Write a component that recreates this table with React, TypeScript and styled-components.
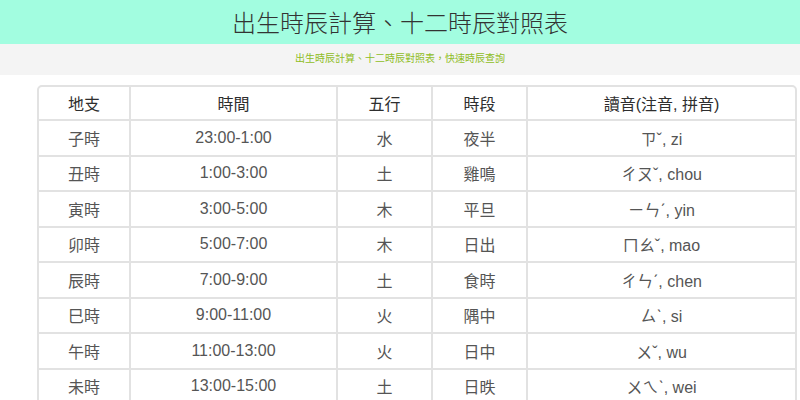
import React from 'react'
import styled, { createGlobalStyle } from 'styled-components'

const GlobalStyle = createGlobalStyle`
	html, body {
		margin: 0;
		padding: 0;
		background: #fff;
	}
	body {
		font-family: 'Liberation Sans', 'Noto Sans CJK TC', Arial, sans-serif;
	}
`

const Page = styled('div')`
	width: 800px;
	height: 400px;
	overflow: hidden;
	display: flex;
	flex-direction: column;
`

const TitleBar = styled('header')`
	flex-shrink: 0;
	height: 44px;
	background-color: #a2fde0;
	display: flex;
	align-items: center;
	justify-content: center;
`

const Title = styled('h1')`
	margin: 0;
	font-family: 'Noto Sans CJK TC', sans-serif;
	font-weight: 300;
	font-size: 24px;
	line-height: 1;
	color: #333;
`

const SubBar = styled('div')`
	flex-shrink: 0;
	height: 31px;
	box-sizing: border-box;
	padding-bottom: 4px;
	background-color: #f4f4f4;
	display: flex;
	align-items: center;
	justify-content: center;
`

const Subtitle = styled('p')`
	margin: 0;
	font-family: 'Noto Sans CJK TC', sans-serif;
	font-size: 10px;
	line-height: 1;
	color: #8fbd1e;
`

const Content = styled('main')`
	flex-shrink: 0;
	padding: 10px 3px 0 37px;
`

const Table = styled('table')`
	width: 760px;
	border-collapse: separate;
	border-spacing: 0;
	border: 2px solid #e2e2e2;
	border-radius: 5px;
	table-layout: fixed;
`

const Cell = styled('td')<{ $head?: boolean }>`
	height: ${(p) => (p.$head ? '32px' : '33.5px')};
	padding: 0;
	text-align: center;
	vertical-align: middle;
	font-size: 16px;
	color: ${(p) => (p.$head ? '#2e2e2e' : '#555')};
	font-weight: 400;
	border-right: 2px solid #e2e2e2;
	border-bottom: 2px solid #e2e2e2;
	&:last-child {
		border-right: none;
	}
`

const Row = styled('tr')`
	&:last-child td {
		border-bottom: none;
	}
`

const columns = ['地支', '時間', '五行', '時段', '讀音(注音, 拼音)']
const widths = [92, 207, 95, 95, 267]

const rows = [
	['子時', '23:00-1:00', '水', '夜半', 'ㄗˇ, zi'],
	['丑時', '1:00-3:00', '土', '雞鳴', 'ㄔㄡˇ, chou'],
	['寅時', '3:00-5:00', '木', '平旦', 'ㄧㄣˊ, yin'],
	['卯時', '5:00-7:00', '木', '日出', 'ㄇㄠˇ, mao'],
	['辰時', '7:00-9:00', '土', '食時', 'ㄔㄣˊ, chen'],
	['巳時', '9:00-11:00', '火', '隅中', 'ㄙˋ, si'],
	['午時', '11:00-13:00', '火', '日中', 'ㄨˇ, wu'],
	['未時', '13:00-15:00', '土', '日昳', 'ㄨㄟˋ, wei'],
]

const App: React.FC = () => {
	return (
		<Page>
			<GlobalStyle />
			<TitleBar>
				<Title>出生時辰計算、十二時辰對照表</Title>
			</TitleBar>
			<SubBar>
				<Subtitle>出生時辰計算、十二時辰對照表，快速時辰查詢</Subtitle>
			</SubBar>
			<Content>
				<Table>
					<colgroup>
						{widths.map((w, i) => (
							<col key={i} style={{ width: w }} />
						))}
					</colgroup>
					<thead>
						<Row>
							{columns.map((c) => (
								<Cell as="th" $head key={c}>
									{c}
								</Cell>
							))}
						</Row>
					</thead>
					<tbody>
						{rows.map((r) => (
							<Row key={r[0]}>
								{r.map((v, i) => (
									<Cell key={i}>{v}</Cell>
								))}
							</Row>
						))}
					</tbody>
				</Table>
			</Content>
		</Page>
	)
}

export default App
